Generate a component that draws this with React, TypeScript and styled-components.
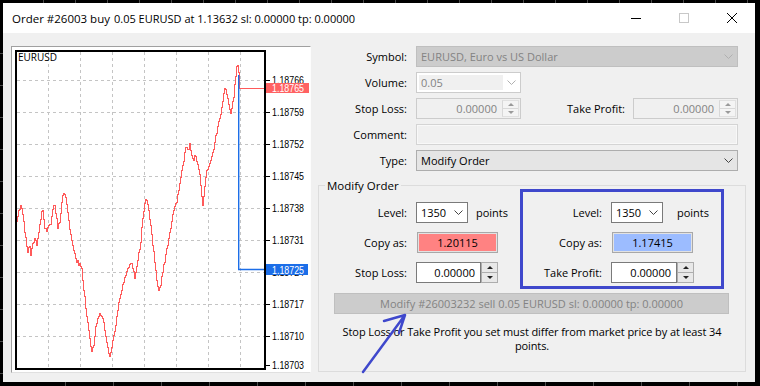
import React, { FC } from 'react';
import styled, { createGlobalStyle } from 'styled-components';

const GlobalStyle = createGlobalStyle`
    html, body {
        margin: 0;
        padding: 0;
    }
    body {
        width: 760px;
        height: 386px;
        overflow: hidden;
        background-color: #000;
        background-image:
            repeating-linear-gradient(90deg, transparent 0 31px, #4a4a4a 31px 32px),
            repeating-linear-gradient(180deg, transparent 0 31px, #4a4a4a 31px 32px),
            repeating-linear-gradient(90deg, transparent 0 47px, #4a4a4a 47px 48px);
        background-size: 100% 3px, 3px 100%, 100% 4px;
        background-position: 12px 0, 0 22px, 18px 382px;
        background-repeat: no-repeat;
        font-family: 'Open Sans', 'Noto Sans', sans-serif;
    }
    #root {
        box-sizing: border-box;
        height: 386px;
        padding: 3px 5px 4px 3px;
    }
`;

const Window = styled.div`
    position: relative;
    width: 752px;
    height: 379px;
    background-color: #f0f0f0;
    display: flex;
    flex-direction: column;
    font-size: 11px;
    color: #000;
`;

const TitleBar = styled.div`
    height: 30px;
    flex: none;
    background-color: #fff;
    display: flex;
    align-items: center;
`;

const TitleText = styled.div`
    padding-left: 9px;
    font-size: 11px;
    white-space: nowrap;
`;

const TitleStrong = styled.span`
    font-size: 11.5px;
    margin-right: 4px;
`;

const CaptionButtons = styled.div`
    margin-left: auto;
    display: flex;
    height: 30px;
`;

const CaptionButton = styled.div<{ $w: number }>`
    width: ${(p) => p.$w}px;
    height: 30px;
    display: flex;
    align-items: center;
    justify-content: center;
`;

const Body = styled.div`
    flex: 1;
    display: flex;
    padding: 13px 0 0 8px;
    min-height: 0;
`;

const ChartFrame = styled.div`
    flex: none;
    box-sizing: border-box;
    width: 300px;
    height: 327px;
    border: 1px solid;
    border-color: #a0a0a0 #fdfdfd #e0e0e0 #a0a0a0;
    background-color: #fff;
    svg {
        display: block;
    }
`;

const RightPane = styled.div`
    flex: 1;
    display: flex;
    flex-direction: column;
    min-width: 0;
`;

const Form = styled.div`
    display: grid;
    grid-template-columns: 96px 1fr;
    grid-auto-rows: 21px;
    column-gap: 9px;
    row-gap: 5px;
    padding-right: 17px;
`;

const Label = styled.div`
    text-align: right;
    line-height: 21px;
    white-space: nowrap;
`;

const InlineRow = styled.div`
    display: flex;
    align-items: center;
`;

const InlineLabel = styled(Label)`
    flex: 1;
    padding-right: 8px;
`;

type ComboTone = 'locked' | 'edit' | 'plain' | 'white';

const comboBg: Record<ComboTone, string> = {
    locked: '#cccccc',
    edit: '#ffffff',
    plain: '#e5e5e5',
    white: '#ffffff',
};

const comboBorder: Record<ComboTone, string> = {
    locked: '#bfbfbf',
    edit: '#cccccc',
    plain: '#adadad',
    white: '#7a7a7a',
};

const ComboBox = styled.div<{ $tone: ComboTone; $w?: number }>`
    box-sizing: border-box;
    width: ${(p) => (p.$w ? `${p.$w}px` : '100%')};
    height: 21px;
    display: flex;
    align-items: center;
    background-color: ${(p) => comboBg[p.$tone]};
    border: 1px solid ${(p) => comboBorder[p.$tone]};
    color: ${(p) => (p.$tone === 'locked' || p.$tone === 'edit' ? '#838383' : '#000')};
`;

const ComboText = styled.div<{ $shaded?: boolean }>`
    flex: 1;
    align-self: stretch;
    margin: ${(p) => (p.$shaded ? '2px 0 2px 2px' : '0')};
    padding-left: ${(p) => (p.$shaded ? '2px' : '4px')};
    line-height: ${(p) => (p.$shaded ? '15px' : '19px')};
    background-color: ${(p) => (p.$shaded ? '#f0f0f0' : 'transparent')};
    white-space: nowrap;
    overflow: hidden;
`;

const ChevronBox = styled.div`
    width: 17px;
    display: flex;
    justify-content: center;
    flex: none;
`;

const Chevron: FC<{ color: string }> = ({ color }) => (
    <svg width="9" height="5" viewBox="0 0 9 5">
        <path d="M0.5 0.5 L4.5 4.5 L8.5 0.5" fill="none" stroke={color} strokeWidth="1" />
    </svg>
);

const Combo: FC<{ tone: ComboTone; text: string; width?: number }> = ({ tone, text, width }) => (
    <ComboBox $tone={tone} $w={width}>
        <ComboText $shaded={tone === 'edit'}>{text}</ComboText>
        <ChevronBox>
            <Chevron color={tone === 'plain' || tone === 'white' ? '#444' : '#b0b0b0'} />
        </ChevronBox>
    </ComboBox>
);

const EditBox = styled.div`
    box-sizing: border-box;
    height: 21px;
    background-color: #f0f0f0;
    border: 1px solid #d4d4d4;
    box-shadow: inset 0 0 0 1px #f8f8f8;
`;

const SpinWrap = styled.div<{ $w: number; $disabled?: boolean }>`
    box-sizing: border-box;
    width: ${(p) => p.$w}px;
    height: 21px;
    display: flex;
    background-color: ${(p) => (p.$disabled ? '#f0f0f0' : 'transparent')};
    border: ${(p) => (p.$disabled ? '1px solid #cccccc' : 'none')};
    color: ${(p) => (p.$disabled ? '#838383' : '#000')};
`;

const SpinField = styled.div<{ $disabled?: boolean }>`
    flex: 1;
    box-sizing: border-box;
    text-align: right;
    padding-right: ${(p) => (p.$disabled ? '4px' : '5px')};
    line-height: 19px;
    background-color: ${(p) => (p.$disabled ? 'transparent' : '#fff')};
    border: ${(p) => (p.$disabled ? 'none' : '1px solid #7a7a7a')};
`;

const SpinButtons = styled.div<{ $disabled?: boolean }>`
    box-sizing: border-box;
    width: 17px;
    flex: none;
    display: flex;
    flex-direction: column;
    border: 1px solid ${(p) => (p.$disabled ? '#e0e0e0' : '#adadad')};
    border-left-color: ${(p) => (p.$disabled ? '#d8d8d8' : '#adadad')};
    background-color: ${(p) => (p.$disabled ? '#f4f4f4' : '#e8e8e8')};
    margin: ${(p) => (p.$disabled ? '1px' : '0')};
`;

const SpinHalf = styled.div<{ $top?: boolean; $disabled?: boolean }>`
    flex: 1;
    display: flex;
    align-items: center;
    justify-content: center;
    border-bottom: ${(p) => (p.$top ? `1px solid ${p.$disabled ? '#d8d8d8' : '#adadad'}` : 'none')};
`;

const Arrow = styled.div<{ $up?: boolean; $disabled?: boolean }>`
    width: 0;
    height: 0;
    border-left: 3px solid transparent;
    border-right: 3px solid transparent;
    ${(p) => (p.$up ? 'border-bottom' : 'border-top')}: 3px solid ${(p) => (p.$disabled ? '#9a9a9a' : '#222')};
`;

const SpinBox: FC<{ width: number; value: string; disabled?: boolean }> = ({ width, value, disabled }) => (
    <SpinWrap $w={width} $disabled={disabled}>
        <SpinField $disabled={disabled}>{value}</SpinField>
        <SpinButtons $disabled={disabled}>
            <SpinHalf $top $disabled={disabled}>
                <Arrow $up $disabled={disabled} />
            </SpinHalf>
            <SpinHalf $disabled={disabled}>
                <Arrow $disabled={disabled} />
            </SpinHalf>
        </SpinButtons>
    </SpinWrap>
);

const Group = styled.fieldset`
    flex: 1;
    min-width: 0;
    margin: 8px 9px 10px 7px;
    padding: 0;
    border: 1px solid #dcdcdc;
    display: flex;
    flex-direction: column;
`;

const Legend = styled.legend`
    margin-left: 6px;
    padding: 0 2px;
    font-size: 11.5px;
    line-height: 13px;
`;

const GroupRow = styled.div`
    display: flex;
    align-items: flex-start;
    margin-top: -3px;
`;

const LevelGrid = styled.div<{ $label: number }>`
    display: grid;
    grid-template-columns: ${(p) => p.$label}px auto;
    grid-template-rows: 21px 21px 21px;
    column-gap: 9px;
    row-gap: 9px;
    align-items: center;
`;

const LeftColumn = styled(LevelGrid)`
    width: 197px;
    padding-top: 13px;
`;

const HighlightBox = styled(LevelGrid)`
    box-sizing: border-box;
    width: 204px;
    margin-left: 4px;
    padding: 10px 0 3px;
    border: 3px solid #3f48cc;
`;

const PointsCell = styled.div`
    display: flex;
    align-items: center;
`;

const PointsText = styled.span<{ $gap: number }>`
    margin-left: ${(p) => p.$gap}px;
`;

const CopyButton = styled.div<{ $fill: string }>`
    box-sizing: border-box;
    width: 81px;
    height: 21px;
    margin-left: 1px;
    border: 1px solid #a8a8a8;
    box-shadow: inset 0 0 0 1px #e2e2e2;
    background-color: ${(p) => p.$fill};
    text-align: center;
    line-height: 19px;
`;

const ModifyButton = styled.div`
    box-sizing: border-box;
    height: 21px;
    margin: 4px 16px 0 15px;
    background-color: #cccccc;
    border: 1px solid #bfbfbf;
    color: #838383;
    text-align: center;
    line-height: 19px;
    white-space: nowrap;
`;

const Note = styled.div`
    margin-top: 11px;
    text-align: center;
    line-height: 14px;
    letter-spacing: -0.1px;
`;

const ArrowMark = styled.svg`
    position: absolute;
    left: 357px;
    top: 309px;
    pointer-events: none;
`;

/* chart data, in page coordinates */
const KEY: [number, number][] = [
    [17, 222], [19, 210], [21, 205], [23, 214], [25, 232], [28, 252], [30, 246], [31, 255], [33, 243],
    [35, 238], [37, 245], [40, 224], [42, 211], [43, 210], [45, 228], [47, 231], [49, 225], [51, 224],
    [53, 209], [55, 205], [57, 218], [58, 228], [60, 222], [62, 202], [64, 193], [66, 197], [68, 212],
    [70, 229], [73, 245], [76, 258], [79, 265], [82, 268], [84, 290], [86, 308], [88, 322], [90, 338],
    [92, 351], [94, 345], [96, 326], [98, 318], [100, 313], [102, 316], [104, 322], [106, 336], [108, 347],
    [110, 356], [112, 347], [114, 335], [116, 325], [118, 310], [120, 298], [122, 290], [124, 282],
    [126, 275], [128, 268], [130, 264], [132, 263], [133, 268], [135, 278], [137, 266], [139, 252],
    [141, 242], [143, 218], [145, 203], [147, 200], [149, 210], [151, 225], [153, 245], [155, 262],
    [157, 280], [159, 290], [161, 285], [163, 272], [165, 262], [167, 248], [169, 238], [171, 228],
    [173, 214], [175, 206], [177, 202], [179, 190], [181, 177], [183, 165], [185, 152], [187, 147],
    [189, 149], [190, 143], [192, 155], [194, 160], [196, 156], [198, 164], [200, 174], [202, 196],
    [203, 205], [205, 186], [207, 170], [209, 166], [211, 160], [213, 152], [215, 142], [217, 133],
    [219, 121], [221, 114], [223, 101], [225, 88], [227, 94], [229, 104], [231, 113], [232, 108],
    [234, 97], [236, 76], [237, 66], [238, 65], [239, 72], [239, 88],
];

const buildPath = () => {
    let seed = 11;
    const rnd = () => {
        seed = (seed * 9301 + 49297) % 233280;
        return seed / 233280;
    };
    let d = `M${KEY[0][0] + 0.5} ${KEY[0][1]}`;
    for (let i = 0; i < KEY.length - 1; i += 1) {
        const [x0, y0] = KEY[i];
        const [x1, y1] = KEY[i + 1];
        const steps = Math.max(1, x1 - x0);
        for (let s = 1; s <= steps; s += 1) {
            const t = s / steps;
            const jitter = s === steps ? 0 : (rnd() - 0.5) * 5;
            const y = y0 + (y1 - y0) * t + jitter;
            d += ` V${y.toFixed(1)} H${(x0 + s + 0.5).toFixed(1)}`;
        }
    }
    return d;
};

const VGRID = [48, 80, 112, 144, 176, 208, 240];
const HGRID = [80, 112, 144, 176, 208, 240, 272, 304, 336];
const PRICES: [number, string][] = [
    [80, '1.18766'],
    [112, '1.18759'],
    [144, '1.18752'],
    [176, '1.18745'],
    [208, '1.18738'],
    [240, '1.18731'],
    [272, '1.18724'],
    [304, '1.18717'],
    [336, '1.18710'],
    [365, '1.18703'],
];

const axisFont = "'Liberation Sans', 'DejaVu Sans', sans-serif";

const AxisText: FC<{ x: number; y: number; fill: string; children: string }> = ({ x, y, fill, children }) => (
    <text
        x={x}
        y={y}
        fontFamily={axisFont}
        fontSize={11}
        fill={fill}
        textLength={32}
        lengthAdjust="spacingAndGlyphs"
    >
        {children}
    </text>
);

const Chart: FC = () => (
    <svg width={298} height={325} viewBox="12 47 298 325">
        {VGRID.map((x) => (
            <line key={x} x1={x + 0.5} y1={52} x2={x + 0.5} y2={368} stroke="#c4c4c4" strokeDasharray="3 3" />
        ))}
        {HGRID.map((y) => (
            <line key={y} x1={17} y1={y + 0.5} x2={264} y2={y + 0.5} stroke="#c4c4c4" strokeDasharray="3 3" />
        ))}
        <path d={buildPath()} fill="none" stroke="#ff5a5a" strokeWidth={1} shapeRendering="crispEdges" />
        <line x1={239} y1={88.5} x2={265} y2={88.5} stroke="#ff5a5a" strokeWidth={1} />
        <polyline points="238.7,75 238.7,269.5 265,269.5" fill="none" stroke="#1c6ee8" strokeWidth={1.4} />
        <rect x={16} y={51} width={249} height={318} fill="none" stroke="#000" strokeWidth={2} />
        {PRICES.map(([y, p]) => (
            <g key={p}>
                <line x1={266} y1={y + 0.5} x2={270} y2={y + 0.5} stroke="#000" />
                <AxisText x={272} y={y + 4} fill="#000">
                    {p}
                </AxisText>
            </g>
        ))}
        <rect x={266} y={83} width={43} height={10} fill="#ff6262" />
        <AxisText x={272} y={92} fill="#fff">
            1.18765
        </AxisText>
        <rect x={266} y={264} width={42} height={11} fill="#1c6ee8" />
        <AxisText x={272} y={273.5} fill="#fff">
            1.18725
        </AxisText>
        <text x={18} y={61} fontFamily="'Open Sans', sans-serif" fontSize={10} fill="#000">
            EURUSD
        </text>
    </svg>
);

export default function App() {
    return (
        <>
            <GlobalStyle />
            <Window>
                <TitleBar>
                    <TitleText>
                        <TitleStrong>Order #26003 buy</TitleStrong>
                        0.05 EURUSD at 1.13632 sl: 0.00000 tp: 0.00000
                    </TitleText>
                    <CaptionButtons>
                        <CaptionButton $w={45}>
                            <svg width="10" height="10" viewBox="0 0 10 10">
                                <line x1="0" y1="5.5" x2="10" y2="5.5" stroke="#000" />
                            </svg>
                        </CaptionButton>
                        <CaptionButton $w={51}>
                            <svg width="10" height="10" viewBox="0 0 10 10">
                                <rect x="0.5" y="0.5" width="9" height="9" fill="none" stroke="#c8c8c8" />
                            </svg>
                        </CaptionButton>
                        <CaptionButton $w={46}>
                            <svg width="10" height="10" viewBox="0 0 10 10">
                                <path d="M0 0 L10 10 M10 0 L0 10" stroke="#000" strokeWidth="1" />
                            </svg>
                        </CaptionButton>
                    </CaptionButtons>
                </TitleBar>
                <Body>
                    <ChartFrame>
                        <Chart />
                    </ChartFrame>
                    <RightPane>
                        <Form>
                            <Label>Symbol:</Label>
                            <Combo tone="locked" text="EURUSD, Euro vs US Dollar" />
                            <Label>Volume:</Label>
                            <Combo tone="edit" text="0.05" width={105} />
                            <Label>Stop Loss:</Label>
                            <InlineRow>
                                <SpinBox width={105} value="0.00000" disabled />
                                <InlineLabel>Take Profit:</InlineLabel>
                                <SpinBox width={105} value="0.00000" disabled />
                            </InlineRow>
                            <Label>Comment:</Label>
                            <EditBox />
                            <Label>Type:</Label>
                            <Combo tone="plain" text="Modify Order" />
                        </Form>
                        <Group>
                            <Legend>Modify Order</Legend>
                            <GroupRow>
                                <LeftColumn $label={88}>
                                    <Label>Level:</Label>
                                    <PointsCell>
                                        <Combo tone="white" text="1350" width={52} />
                                        <PointsText $gap={8}>points</PointsText>
                                    </PointsCell>
                                    <Label>Copy as:</Label>
                                    <CopyButton $fill="#ff8282">1.20115</CopyButton>
                                    <Label>Stop Loss:</Label>
                                    <SpinBox width={82} value="0.00000" />
                                </LeftColumn>
                                <HighlightBox $label={79}>
                                    <Label>Level:</Label>
                                    <PointsCell>
                                        <Combo tone="white" text="1350" width={52} />
                                        <PointsText $gap={14}>points</PointsText>
                                    </PointsCell>
                                    <Label>Copy as:</Label>
                                    <CopyButton $fill="#9cbcff">1.17415</CopyButton>
                                    <Label>Take Profit:</Label>
                                    <SpinBox width={83} value="0.00000" />
                                </HighlightBox>
                            </GroupRow>
                            <ModifyButton>Modify #26003232 sell 0.05 EURUSD sl: 0.00000 tp: 0.00000</ModifyButton>
                            <Note>
                                Stop Loss or Take Profit you set must differ from market price by at least 34
                                <br />
                                points.
                            </Note>
                        </Group>
                    </RightPane>
                </Body>
                <ArrowMark width={56} height={68} viewBox="360 312 56 68">
                    <path
                        d="M363 372 L405 315 M384 321 L405 315 L399 333"
                        fill="none"
                        stroke="#3f48cc"
                        strokeWidth={2.5}
                        strokeLinecap="round"
                        strokeLinejoin="round"
                    />
                </ArrowMark>
            </Window>
        </>
    );
}
